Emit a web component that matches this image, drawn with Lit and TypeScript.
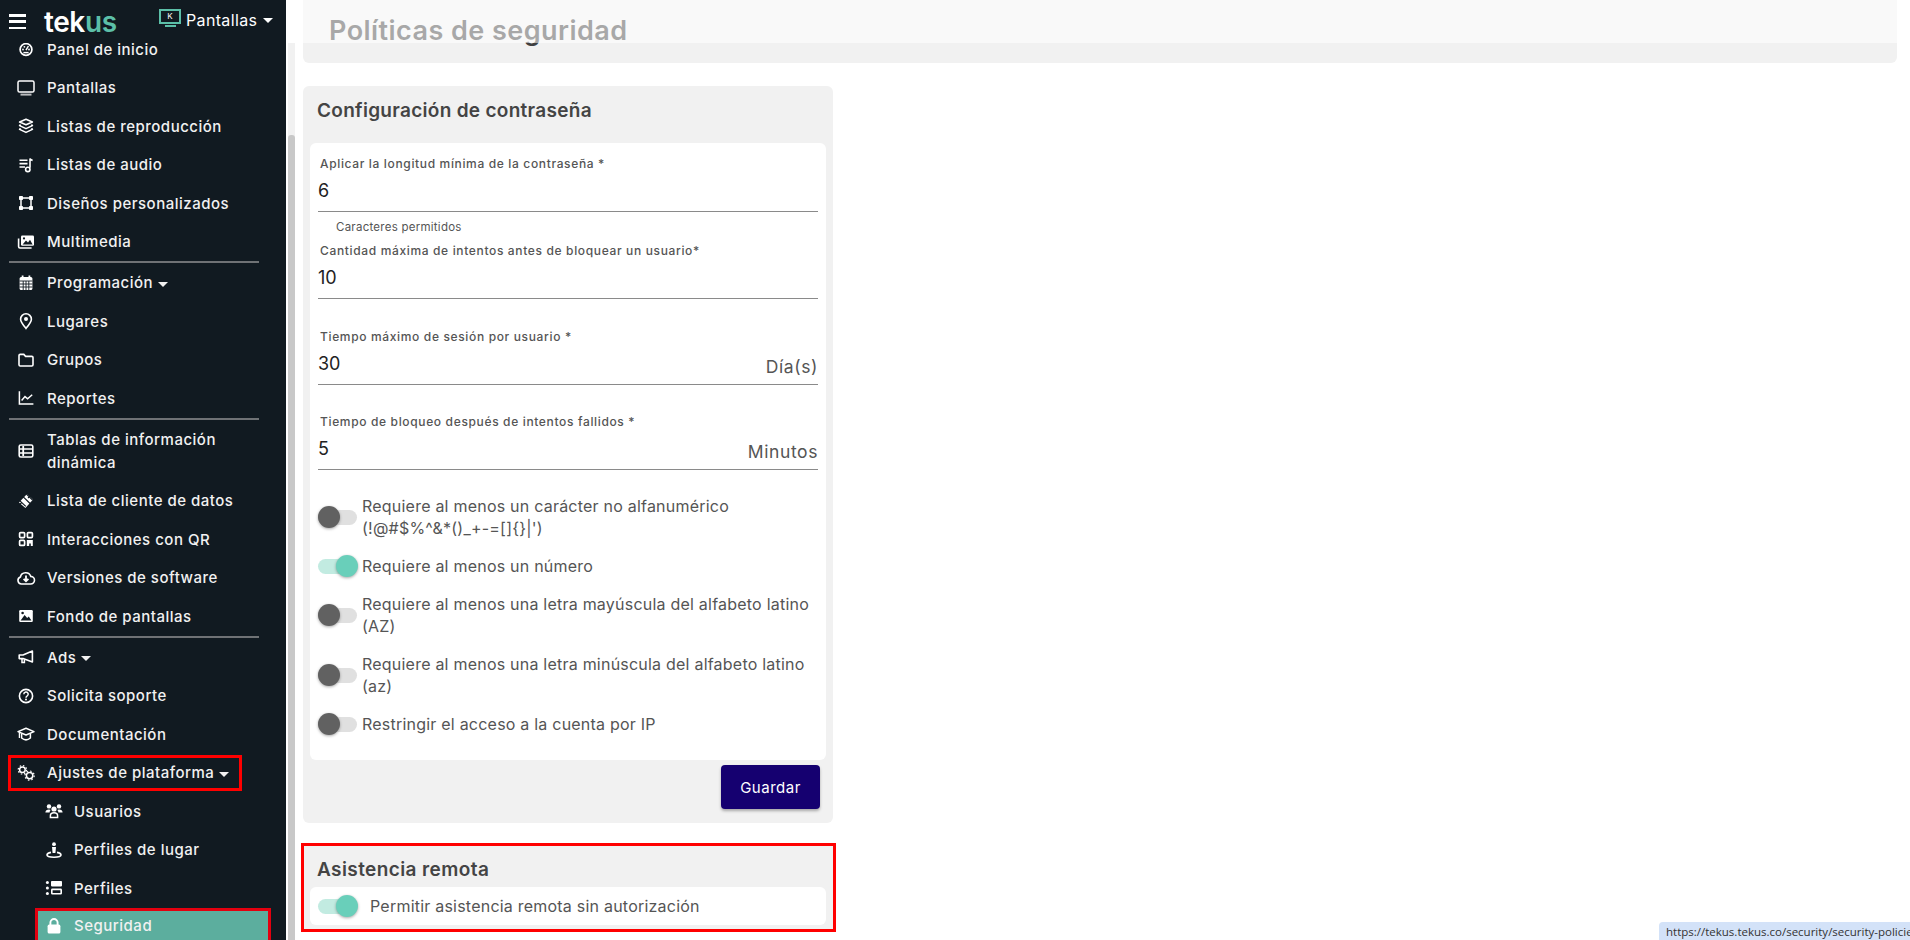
import { LitElement, html, css, svg } from "lit";
import { customElement } from "lit/decorators.js";

const W = "#fff";
const BG = "#111a21";
const icons: Record<string, unknown> = {
  gauge: svg`<circle cx="10" cy="10.5" r="5.9" fill="none" stroke="${W}" stroke-width="1.7"/><path d="M10 11.2 12.4 7" stroke="${W}" stroke-width="1.5"/><circle cx="7" cy="10.5" r=".9" fill="${W}"/><circle cx="8.4" cy="7.8" r=".9" fill="${W}"/><circle cx="13" cy="10.5" r=".9" fill="${W}"/><path d="M7.4 13.6h5.2" stroke="${W}" stroke-width="1.5"/>`,
  monitor: svg`<rect x="2" y="3" width="16" height="11" rx="1.6" fill="none" stroke="${W}" stroke-width="1.5"/><path d="M4.5 16.6h11" stroke="#b9bbbd" stroke-width="2"/>`,
  layers: svg`<g fill="none" stroke="${W}" stroke-width="1.6" stroke-linejoin="round"><path d="M10 3.2 16.4 6 10 8.8 3.6 6Z"/><path d="M4.6 8.6 3.6 9.6 10 12.6 16.4 9.6 15.4 8.6"/><path d="M4.6 12.4 3.6 13.4 10 16.4 16.4 13.4 15.4 12.4"/></g>`,
  playlist: svg`<g fill="none" stroke="${W}" stroke-width="1.6"><path d="M3.5 5.2h8M3.5 8.6h8M3.5 12h5.5"/><path d="M14 12.8V3.6c.6 1.3 1.7 1.6 2.6 1.8"/><circle cx="11.8" cy="14.4" r="2.2"/></g>`,
  vector: svg`<g fill="none" stroke="${W}" stroke-width="1.5"><rect x="5" y="5" width="10" height="10"/></g><g fill="${W}"><rect x="3" y="3" width="4" height="4" rx=".8"/><rect x="13" y="3" width="4" height="4" rx=".8"/><rect x="3" y="13" width="4" height="4" rx=".8"/><rect x="13" y="13" width="4" height="4" rx=".8"/></g>`,
  images: svg`<rect x="5" y="3.4" width="13" height="10.4" rx="1.3" fill="${W}"/><path d="M6.6 12.4 10 8.6l2 2 2-2.8 2.6 4.6Z" fill="${BG}"/><circle cx="8" cy="6.4" r="1.1" fill="${BG}"/><path d="M2.6 6.4V14.6a1.4 1.4 0 0 0 1.4 1.4H15.6" fill="none" stroke="${W}" stroke-width="1.6"/>`,
  calendar: svg`<rect x="3.6" y="4" width="12.8" height="13" rx="1.5" fill="${W}"/><path d="M6.6 2.4v3M13.4 2.4v3" stroke="${W}" stroke-width="1.8"/><path d="M3.6 8h12.8M3.6 11h12.8M3.6 14h12.8M7.2 8v9M10 8v9M12.8 8v9" stroke="${BG}" stroke-width=".9"/>`,
  pin: svg`<path d="M10 17.4C7 13.8 4.6 11 4.6 8.2a5.4 5.4 0 0 1 10.8 0C15.4 11 13 13.8 10 17.4Z" fill="none" stroke="${W}" stroke-width="1.6"/><circle cx="10" cy="8" r="2" fill="${W}"/>`,
  folder: svg`<path d="M3 5.6a1.2 1.2 0 0 1 1.2-1.2h3.6l1.8 2h6.2A1.2 1.2 0 0 1 17 7.6v7.2a1.2 1.2 0 0 1-1.2 1.2H4.2A1.2 1.2 0 0 1 3 14.8Z" fill="none" stroke="${W}" stroke-width="1.6"/>`,
  chart: svg`<path d="M3.4 3.2V16h14" fill="none" stroke="${W}" stroke-width="1.5"/><path d="M5.6 12.6 9 8.6l2.6 2.2 4.6-4" fill="none" stroke="${W}" stroke-width="1.5"/>`,
  table: svg`<rect x="3.2" y="4" width="13.6" height="12" rx="1.6" fill="none" stroke="${W}" stroke-width="1.6"/><path d="M3.2 8h13.6M3.2 12h13.6" stroke="${W}" stroke-width="1.5"/><path d="M7.2 5v10" stroke="${W}" stroke-width="1.8"/>`,
  client: svg`<path d="M11 3 17 8.6 9.4 17 3 11.4Z" fill="${W}"/><path d="M7 5.6 14.6 13M10.4 3 16.6 9M3.4 9.4 9.8 15.4M3 14l3-2.6M14.6 4.6 12 7" stroke="${BG}" stroke-width="1.2"/>`,
  qr: svg`<g fill="none" stroke="${W}" stroke-width="1.7"><rect x="3.6" y="3.6" width="5" height="5" rx="1"/><rect x="11.4" y="3.6" width="5" height="5" rx="1"/><rect x="3.6" y="11.4" width="5" height="5" rx="1"/></g><path d="M10.8 11h6v6h-2v-2.4h-1.6V17h-2.4Z" fill="${W}"/>`,
  cloud: svg`<path d="M5.4 16a3.6 3.6 0 0 1-1-7 5.4 5.4 0 0 1 10.4-.6A3.8 3.8 0 0 1 14.6 16Z" fill="none" stroke="${W}" stroke-width="1.6"/><path d="M10 7.6v5.2M7.6 10.8 10 13.2l2.4-2.4" fill="none" stroke="${W}" stroke-width="1.8"/>`,
  image: svg`<rect x="3.2" y="4" width="13.6" height="12" rx="1.2" fill="${W}"/><path d="M4.6 14.6 8.6 9l2.6 3 1.6-1.6 2.6 4.2Z" fill="${BG}"/><circle cx="6.6" cy="7" r="1.3" fill="${BG}"/>`,
  bullhorn: svg`<path d="M16.4 4v11L7 11.6H3.2V8H7Z" fill="none" stroke="${W}" stroke-width="1.6" stroke-linejoin="round"/><path d="M6 12v3.6h2.4V12.6" fill="none" stroke="${W}" stroke-width="1.5"/>`,
  help: svg`<circle cx="10" cy="10" r="6.6" fill="none" stroke="${W}" stroke-width="1.6"/><path d="M7.8 8.2a2.2 2.2 0 1 1 3.2 2c-.7.4-1 .8-1 1.5" fill="none" stroke="${W}" stroke-width="1.5"/><circle cx="10" cy="13.6" r="1" fill="${W}"/>`,
  cap: svg`<path d="M10 4.2 18 7.6 10 11 2 7.6Z" fill="none" stroke="${W}" stroke-width="1.5" stroke-linejoin="round"/><path d="M5.6 9.6V14c2.6 2.2 6.2 2.2 8.8 0V9.6" fill="none" stroke="${W}" stroke-width="1.5"/><path d="M3.4 8.4V14" stroke="${W}" stroke-width="1.3"/>`,
  cogs: svg`<g fill="none" stroke="${W}"><circle cx="6.4" cy="6.8" r="2.8" stroke-width="1.5"/><circle cx="13.6" cy="12.6" r="3.2" stroke-width="1.5"/><circle cx="6.4" cy="6.8" r="4.2" stroke-width="1.2" stroke-dasharray="1.5 1.8"/><circle cx="13.6" cy="12.6" r="4.6" stroke-width="1.2" stroke-dasharray="1.6 2"/></g>`,
  users: svg`<g fill="${W}"><circle cx="5" cy="5.4" r="2.2"/><circle cx="15" cy="5.4" r="2.2"/><circle cx="10" cy="8" r="2.6"/><path d="M1.4 11.4c0-2 1.4-3 3.6-3 .8 0 1.2.2 1.6.5-.7.8-1 1.6-1 2.5ZM18.6 11.4c0-2-1.4-3-3.6-3-.8 0-1.2.2-1.6.5.7.8 1 1.6 1 2.5Z"/></g><path d="M6.4 16.4v-1.6c0-2 1.4-3 3.6-3s3.6 1 3.6 3v1.6Z" fill="none" stroke="${W}" stroke-width="1.5"/>`,
  place: svg`<circle cx="10" cy="4.2" r="1.9" fill="${W}"/><path d="M8 7h4l-.6 6H8.6Z" fill="${W}"/><path d="M7 12.4C4.6 12.8 3 13.8 3 15c0 1.4 3.2 2.2 7 2.2s7-.8 7-2.2c0-1.2-1.6-2.2-4-2.6" fill="none" stroke="${W}" stroke-width="1.6"/>`,
  profiles: svg`<g fill="${W}"><circle cx="3.4" cy="4.6" r="1.5"/><circle cx="3.4" cy="10" r="1.5"/><circle cx="3.4" cy="15.4" r="1.5"/><rect x="7" y="3" width="11" height="5.4" rx=".8"/></g><rect x="7.8" y="11.4" width="9.4" height="4.4" rx=".6" fill="none" stroke="${W}" stroke-width="1.6"/>`,
  lock: svg`<rect x="3.6" y="8.6" width="12.8" height="9" rx="1.6" fill="${W}"/><path d="M6.4 9V6.6a3.6 3.6 0 0 1 7.2 0V9" fill="none" stroke="${W}" stroke-width="1.9"/>`,
};

type Row = { label?: string; icon?: string; caret?: boolean; sub?: boolean; cls?: string; rule?: boolean };
const rows: Row[] = [
  { label: "Panel de inicio", icon: "gauge" },
  { label: "Pantallas", icon: "monitor" },
  { label: "Listas de reproducción", icon: "layers" },
  { label: "Listas de audio", icon: "playlist" },
  { label: "Diseños personalizados", icon: "vector" },
  { label: "Multimedia", icon: "images" },
  { rule: true },
  { label: "Programación", icon: "calendar", caret: true },
  { label: "Lugares", icon: "pin" },
  { label: "Grupos", icon: "folder" },
  { label: "Reportes", icon: "chart" },
  { rule: true },
  { label: "Tablas de información dinámica", icon: "table", cls: "tall" },
  { label: "Lista de cliente de datos", icon: "client" },
  { label: "Interacciones con QR", icon: "qr" },
  { label: "Versiones de software", icon: "cloud" },
  { label: "Fondo de pantallas", icon: "image" },
  { rule: true },
  { label: "Ads", icon: "bullhorn", caret: true },
  { label: "Solicita soporte", icon: "help" },
  { label: "Documentación", icon: "cap" },
  { label: "Ajustes de plataforma", icon: "cogs", caret: true, cls: "boxed" },
  { label: "Usuarios", icon: "users", sub: true },
  { label: "Perfiles de lugar", icon: "place", sub: true },
  { label: "Perfiles", icon: "profiles", sub: true },
  { label: "Seguridad", icon: "lock", sub: true, cls: "active" },
];

const fields = [
  { label: "Aplicar la longitud mínima de la contraseña *", value: "6", cls: "first" },
  { label: "Cantidad máxima de intentos antes de bloquear un usuario*", value: "10", cls: "tight", hint: "Caracteres permitidos" },
  { label: "Tiempo máximo de sesión por usuario *", value: "30", suffix: "Día(s)", cls: "third" },
  { label: "Tiempo de bloqueo después de intentos fallidos *", value: "5", suffix: "Minutos" },
];

const toggles = [
  { on: false, text: "Requiere al menos un carácter no alfanumérico", nb: "(!@#$%^&*()_+-=[]{}|')" },
  { on: true, text: "Requiere al menos un número" },
  { on: false, text: "Requiere al menos una letra mayúscula del alfabeto latino", nb: "(AZ)" },
  { on: false, text: "Requiere al menos una letra minúscula del alfabeto latino", nb: "(az)" },
  { on: false, text: "Restringir el acceso a la cuenta por IP" },
];

@customElement("app-root")
export class AppRoot extends LitElement {
  static styles = css`
    :host { display: block; font-family: Inter, "Noto Sans", sans-serif; }
    * { box-sizing: border-box; }
    .app { display: flex; width: 1910px; height: 940px; overflow: hidden; background: #fff; position: relative; }

    .side { width: 286px; flex: none; background: #111a21; color: #f1f1f1; overflow: hidden; }
    .head { height: 43px; display: flex; align-items: center; position: relative; z-index: 1; background: #111a21; padding-left: 9px; color: #fff; }
    .burger { width: 17px; height: 15px; display: flex; flex-direction: column; justify-content: space-between; }
    .burger i { display: block; height: 2.5px; background: #fff; }
    .logo { margin-left: 18px; font-size: 28px; font-weight: 600; line-height: 43px; letter-spacing: -0.4px; width: 114px; padding-top: 1px; }
    .logo span { color: #5cbfa8; }
    .kiosk { width: 24px; height: 20px; margin-top: -5px; display: flex; flex-direction: column; align-items: center; }
    .kiosk b { width: 22px; height: 15px; border: 2px solid #5cbfa8; font-size: 8px; font-weight: 400; line-height: 11px; text-align: center; }
    .kiosk u { width: 11px; height: 2px; margin-top: 1px; background: #5cbfa8; display: block; }
    .product { margin-left: 4px; font-size: 16px; font-weight: 400; margin-top: -3px; letter-spacing: 0.35px; }

    .nav { margin-top: -13.2px; }
    .row { display: flex; align-items: center; height: 38.5px; padding-left: 16px; font-size: 15px; font-weight: 500; letter-spacing: 0.5px; line-height: 23px; }
    .row svg { width: 20px; height: 20px; flex: none; margin-right: 11px; }
    .row.tall { height: 61.5px; }
    .row.tall .lbl { width: 190px; }
    .row.sub { padding-left: 44px; }
    .row.sub svg { margin-right: 10px; }
    .row.boxed { height: 36px; margin: 1.25px 44px 1.25px 8px; width: 234px; border: 3px solid #f00; padding-left: 5px; }
    .row.active { margin-left: 35px; width: 236px; height: 36px; border: 3px solid #e3000f; background: #5cae9e; padding-left: 6px; }
    .rule { height: 2px; margin: 0.3px 27px 0.3px 9px; background: #6f7275; }
    .caret { width: 0; height: 0; margin-left: 5px; border: 5px solid transparent; border-top-color: currentColor; border-bottom: 0; display: inline-block; vertical-align: middle; }
    .head .caret { margin-top: -3px; margin-left: 6px; }

    .rail { width: 7px; flex: none; margin: 43px 0 0 2px; background: #f1f1f1; }
    .thumb { height: 100%; margin-top: 92px; background: #c8c8c8; border-radius: 3px 3px 0 0; }

    .main { flex: 1; padding: 0 13px 0 8px; color: #444; min-width: 0; }
    .veil { position: absolute; left: 295px; right: 0; top: 0; height: 43px; background: rgba(255, 255, 255, 0.55); }
    .title { height: 63px; background: #f1f1f1; border-radius: 0 0 6px 6px; padding: 13px 0 0 26px; font-size: 27px; line-height: 36px; font-weight: 600; color: #3f3f3f; letter-spacing: 0.45px; }

    .card { width: 530px; background: #f1f1f1; border-radius: 6px; margin-top: 23px; padding: 0 7px; }
    .card h2 { margin: 0; padding: 11px 0 18px 7px; font-size: 19px; line-height: 28px; font-weight: 600; color: #444; letter-spacing: 0.3px; }
    .panel { background: #fff; border-radius: 6px; padding: 12px 8px 0; height: 617px; }
    .field { margin-top: 28px; }
    .field.first { margin-top: 0; }
    .field.tight { margin-top: 7px; }
    .field.third { margin-top: 29px; }
    .field label { display: block; padding-left: 2px; font-size: 12px; line-height: 18px; font-weight: 500; color: #555; letter-spacing: 0.65px; }
    .val { display: flex; justify-content: space-between; margin-top: 4px; height: 35px; padding-bottom: 7px; border-bottom: 1px solid #8a8a8a; font-size: 18px; line-height: 28px; color: #222; }
    .suffix { font-size: 17.5px; color: #555; line-height: 28px; margin-top: 3px; letter-spacing: 0.6px; }
    .hint { margin: 7px 0 0 18px; font-size: 11.5px; line-height: 16px; color: #555; letter-spacing: 0.25px; }

    .toggles { margin-top: 25px; display: flex; flex-direction: column; gap: 16px; }
    .tg { display: flex; align-items: center; font-size: 16px; line-height: 22px; color: #555; letter-spacing: 0.22px; }
    .nb { display: block; white-space: nowrap; }
    .sw { width: 39px; height: 22px; flex: none; margin-right: 5px; display: flex; align-items: center; position: relative; }
    .sw::before { content: ""; display: block; width: 100%; height: 15px; border-radius: 8px; background: #e0e0e0; }
    .sw i { position: absolute; top: 0; left: 0; width: 22px; height: 22px; border-radius: 50%; background: #616161; box-shadow: 0 1px 3px rgba(0, 0, 0, 0.35); }
    .sw.on::before { background: #c2ebe1; }
    .sw.on i { left: 18px; background: #69cfba; }

    .actions { display: flex; justify-content: flex-end; padding: 5px 6px 14px 0; }
    .btn { width: 99px; height: 44px; background: #150070; color: #fff; border: 0; border-radius: 4px; font: 400 15px Inter, sans-serif; letter-spacing: 0.5px; box-shadow: 0 2px 3px rgba(0, 0, 0, 0.3); }

    .mark { width: 535px; height: 89px; margin: 20px 0 0 -2px; border: 3px solid #f00; background: #f1f1f1; padding: 0 7px 0 6px; }
    .mark h2 { margin: 0; padding: 10px 0 0 7px; height: 41px; font-size: 19px; line-height: 28px; font-weight: 600; color: #444; letter-spacing: 0.4px; }
    .assist { height: 38px; background: #fff; border-radius: 6px; padding-left: 8px; display: flex; align-items: center; font-size: 16px; color: #555; letter-spacing: 0.22px; }
    .assist .sw { margin-right: 13px; }

    .status { position: absolute; left: 1659px; bottom: 0; width: 251px; height: 18px; background: #d3e2f8; border-radius: 4px 0 0 0; padding: 2px 0 0 7px; overflow: hidden; white-space: nowrap; font: 11.5px/16px "Open Sans", sans-serif; color: #333; }
  `;

  private row(r: Row) {
    if (r.rule) return html`<div class="rule"></div>`;
    const cls = ["row", r.sub ? "sub" : "", r.cls ?? ""].join(" ");
    return html`<div class=${cls}>
      <svg viewBox="0 0 20 20">${icons[r.icon!]}</svg>
      <span class="lbl">${r.label}${r.caret ? html`<span class="caret"></span>` : ""}</span>
    </div>`;
  }

  render() {
    return html`<div class="app">
      <aside class="side">
        <div class="head">
          <div class="burger"><i></i><i></i><i></i></div>
          <div class="logo">tek<span>us</span></div>
          <div class="kiosk"><b>K</b><u></u></div>
          <div class="product">Pantallas<span class="caret"></span></div>
        </div>
        <nav class="nav">${rows.map((r) => this.row(r))}</nav>
      </aside>
      <div class="rail"><div class="thumb"></div></div>
      <main class="main">
        <div class="title">Políticas de seguridad</div>
        <section class="card">
          <h2>Configuración de contraseña</h2>
          <div class="panel">
            ${fields.map(
              (f) => html`
                ${f.hint ? html`<div class="hint">${f.hint}</div>` : ""}
                <div class="field ${f.cls ?? ""}">
                  <label>${f.label}</label>
                  <div class="val"><span>${f.value}</span>${f.suffix ? html`<span class="suffix">${f.suffix}</span>` : ""}</div>
                </div>
              `
            )}
            <div class="toggles">
              ${toggles.map(
                (t) => html`<div class="tg">
                  <div class="sw ${t.on ? "on" : ""}"><i></i></div>
                  <span>${t.text}${t.nb ? html`<span class="nb">${t.nb}</span>` : ""}</span>
                </div>`
              )}
            </div>
          </div>
          <div class="actions"><button class="btn">Guardar</button></div>
        </section>
        <section class="mark">
          <h2>Asistencia remota</h2>
          <div class="assist">
            <div class="sw on"><i></i></div>
            <span>Permitir asistencia remota sin autorización</span>
          </div>
        </section>
      </main>
      <div class="veil"></div>
      <div class="status">https://tekus.tekus.co/security/security-policies</div>
    </div>`;
  }
}
